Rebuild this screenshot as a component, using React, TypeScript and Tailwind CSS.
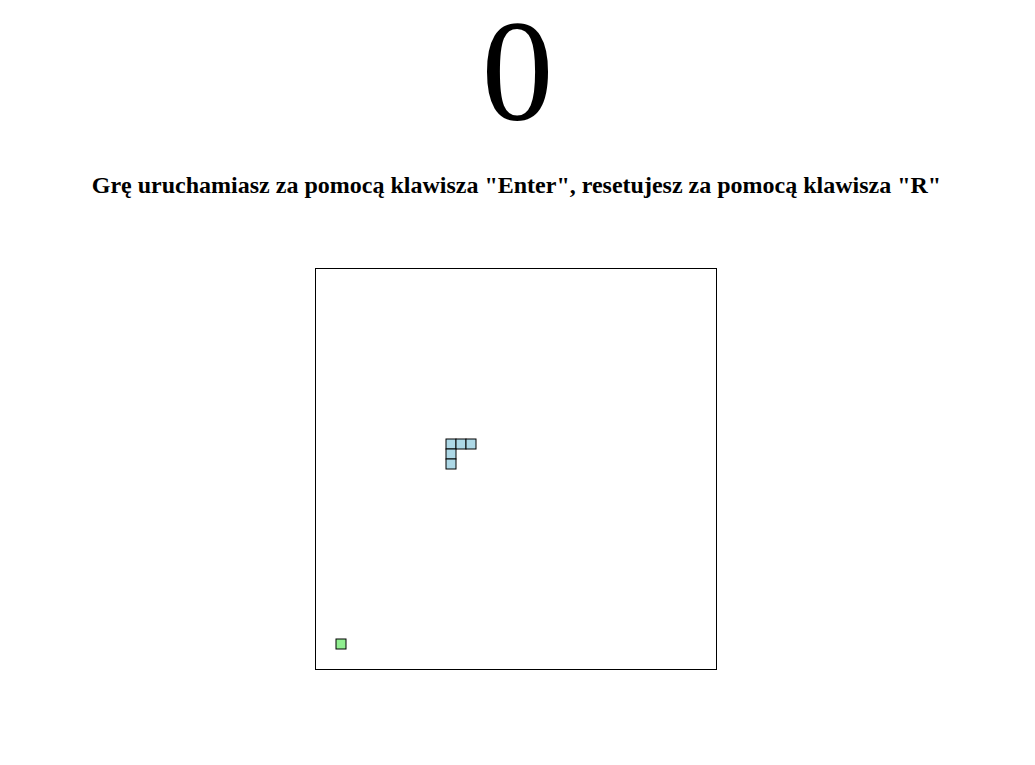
import React from "react";

// snake segments and food in canvas coordinates (10px grid)
const SNAKE = [
  { x: 130, y: 170 },
  { x: 140, y: 170 },
  { x: 150, y: 170 },
  { x: 130, y: 180 },
  { x: 130, y: 190 },
];
const FOOD = { x: 20, y: 370 };

export default function App() {
  return (
    <div className="min-h-screen bg-white text-black font-['Liberation_Serif','Times_New_Roman',serif] flex flex-col items-center">
      <div className="text-[144px] leading-none">0</div>
      <h2 className="mt-[29px] text-2xl leading-none font-bold mr-[2px]">
        Grę uruchamiasz za pomocą klawisza "Enter", resetujesz za pomocą
        klawisza "R"
      </h2>
      <div className="mt-[71px] mr-[4px] border border-black">
        <svg width={400} height={400} className="block">
          {SNAKE.map((s, i) => (
            <rect
              key={i}
              x={s.x}
              y={s.y}
              width={10}
              height={10}
              fill="#add8e6"
              stroke="#000"
              strokeWidth={1}
            />
          ))}
          <rect
            x={FOOD.x}
            y={FOOD.y}
            width={10}
            height={10}
            fill="#90ee90"
            stroke="#000"
            strokeWidth={1}
          />
        </svg>
      </div>
    </div>
  );
}
